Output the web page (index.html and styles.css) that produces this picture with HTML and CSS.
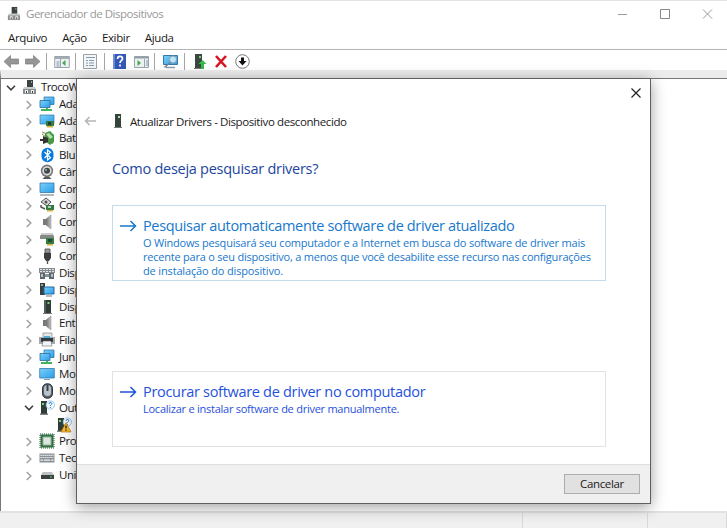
FILE: index.html
```html
<!DOCTYPE html>
<html lang="pt-BR">
<head>
<meta charset="utf-8">
<title>Gerenciador de Dispositivos</title>
<link rel="stylesheet" href="styles.css">
</head>
<body>
<svg class="defs" width="0" height="0">
  <defs>
    <linearGradient id="scr" x1="0" y1="0" x2="1" y2="1"><stop offset="0" stop-color="#7cd0fa"/><stop offset="1" stop-color="#2a9de8"/></linearGradient>
    <linearGradient id="met" x1="0" y1="0" x2="1" y2="0"><stop offset="0" stop-color="#6d6d6d"/><stop offset="1" stop-color="#c4c4c4"/></linearGradient>
  </defs>
  <symbol id="chev-r" viewBox="0 0 8 10"><path d="M1.7 1 5.8 5 1.7 9" fill="none" stroke="#a0a0a0" stroke-width="1.5"/></symbol>
  <symbol id="chev-d" viewBox="0 0 10 8"><path d="M1 1.7 5 5.8 9 1.7" fill="none" stroke="#404040" stroke-width="1.6"/></symbol>
  <symbol id="computer" viewBox="0 0 16 16"><path d="M6 1h6v8H6z" fill="#3c4443"/><path d="M10 2h1v2h-1z" fill="#8fa39a"/><path d="M3 8h11l1 2H2z" fill="#c9cccc"/><path d="M2 10h13v5H2z" fill="#8b8e90"/><path d="M4 11h3v3H4zM10 11h3v3h-3z" fill="#eee"/><path d="M5 12h1v2H5zM11 12h1v2h-1z" fill="#444"/></symbol>
  <symbol id="network" viewBox="0 0 16 16"><path d="M5 1h10v7.500H5z" fill="url(#scr)" stroke="#3478ac" stroke-width=".8"/><path d="M1 4.500h10v7H1z" fill="url(#scr)" stroke="#2c6c9c" stroke-width=".8"/><path d="M2 14h11M8 12V14" stroke="#43b45b" stroke-width="2"/></symbol>
  <symbol id="display-card" viewBox="0 0 16 16"><path d="M1 2h14v9H1z" fill="url(#scr)" stroke="#3478ac" stroke-width=".7"/><path d="M7 8h8v5H7z" fill="#347c43"/><path d="M9 9h3v3H9z" fill="#203d28"/><path d="M8 13h6v1.5H8z" fill="#d9b13b"/></symbol>
  <symbol id="battery" viewBox="0 0 16 16"><path d="M6 3 11 1l4 4v7l-4 3-5-4z" fill="#3f9a45"/><path d="m7 4 3-1 4 4-3 2z" fill="#b7dda7"/><path d="M1 9h3V6l5 2v4l-5 2v-3H1z" fill="#33342f"/><path d="M8 4 3 2M7 7 3 4m6 6c4 1 4 3 5 4" fill="none" stroke="#8e814d"/></symbol>
  <symbol id="bluetooth" viewBox="0 0 16 16"><rect x="2.5" y=".7" width="12" height="14.6" rx="6" fill="#0879df"/><path d="m5.5 5 6 5.8-3 2.3V3l3 2.3-6 5.7" fill="none" stroke="#fff" stroke-width="1.2"/></symbol>
  <symbol id="camera" viewBox="0 0 16 16"><circle cx="8" cy="6.8" r="6.2" fill="#777"/><circle cx="8" cy="6.8" r="4.600" fill="#ddd"/><circle cx="8" cy="6.8" r="3" fill="#3f4548"/><circle cx="7" cy="6" r="1" fill="#9bb3bf"/><path d="M3.500 15 6 12.500h4l2.500 2.500z" fill="#555"/></symbol>
  <symbol id="pc" viewBox="0 0 16 16"><path d="M1 2h14v9.500H1z" fill="url(#scr)" stroke="#3478ac" stroke-width=".8"/><path d="M1 14h14" stroke="#8097a5" stroke-width="1.3"/></symbol>
  <symbol id="monitor" viewBox="0 0 16 16"><path d="M.7 2.5h14.6v9.5H.7z" fill="url(#scr)" stroke="#3478ac" stroke-width=".8"/><path d="M5 13.5h6" stroke="#7f9fb2"/></symbol>
  <symbol id="storage" viewBox="0 0 16 16"><path d="m2 5 5-4 5 4-4 4z" fill="#d6d6d6" stroke="#555"/><circle cx="7" cy="5" r="1.5" fill="#555"/><path d="M2 8v2l4 2" fill="none" stroke="#555" stroke-width="1.5"/><path d="M7 8h8v5H7z" fill="#347c43"/><path d="M9 9h3v2H9z" fill="#b5cbb4"/><path d="M8 13h6v1.5H8z" fill="#d9b13b"/></symbol>
  <symbol id="speaker" viewBox="0 0 16 16"><path d="M4 5h3v6H4z" fill="#777"/><path d="m7 5 5-4v14l-5-4z" fill="url(#met)" stroke="#888" stroke-width=".5"/></symbol>
  <symbol id="adapter" viewBox="0 0 16 16"><path d="m1 5 2-3h10l2 3v3H1z" fill="#858a89"/><path d="m2 4 1-2h10l1 2z" fill="#ccc"/><path d="M7 7h8v6H7z" fill="#347c43"/><path d="M9 8h4v3H9z" fill="#204c2b"/><path d="M8 13h6v1.5H8z" fill="#d9b13b"/></symbol>
  <symbol id="usb" viewBox="0 0 16 16"><path d="M6 1h5v4H6z" fill="#999" stroke="#444" stroke-width=".8"/><path d="M5 5h7v5l-2 3H7l-2-3z" fill="#3d3d3d"/><path d="M8.5 12v4" stroke="#555" stroke-width="1.4"/></symbol>
  <symbol id="hid" viewBox="0 0 16 16"><path d="M0 3h16v5H0z" fill="#858b8e"/><path d="M1 4.5h14M1 6.5h14" stroke="#e0e3e4" stroke-dasharray="2 1"/><path d="M1 8h5v6H1zM10 8h5v6h-5z" fill="#5d686e"/><path d="M2 9h2v3H2zM12 9h2v3h-2z" fill="#b8c1c5"/><path d="M6 9h4v3H6z" fill="#8b9599"/></symbol>
  <symbol id="software" viewBox="0 0 16 16"><path d="M1 1h5v12H1z" fill="#35413c"/><path d="M2 2h2v2H2z" fill="#8ea69b"/><path d="M5 5h10v7H5z" fill="url(#scr)" stroke="#266b9e"/><path d="M7 14h6" stroke="#777"/></symbol>
  <symbol id="tower" viewBox="0 0 16 16"><path d="M5 1h7v13H5z" fill="#303c36"/><path d="M5 1h2v13H5z" fill="#506258"/><path d="M8.5 3h2v2h-2z" fill="#6edb72"/><path d="M4 14h9v1H4z" fill="#777"/></symbol>
  <symbol id="printer" viewBox="0 0 16 16"><path d="M4 1h9v5H4z" fill="#e4e8e9" stroke="#777" stroke-width=".6"/><path d="M0 5h16v7H0z" fill="#a4aaae"/><path d="M2 6h12v4H2z" fill="#323a3e"/><path d="M4 9h8l1 5H3z" fill="#f2f6f8" stroke="#555" stroke-width=".5"/><path d="M5 4h6v2H5z" fill="#50abd2"/></symbol>
  <symbol id="mouse" viewBox="0 0 16 16"><rect x="3.5" y=".8" width="10" height="14.4" rx="4.500" fill="#59616a" stroke="#303841"/><rect x="5" y="2" width="7" height="11" rx="3.5" fill="#bac2ca"/><path d="M7.5 2h2v6h-2z" fill="#3a4249"/></symbol>
  <symbol id="unknown" viewBox="0 0 16 16"><path d="M2 1h6v13H2z" fill="#303c36"/><path d="M3 3h2v2H3z" fill="#6edb72"/><path d="M1 13.5h8v1.3H1z" fill="#666"/><circle cx="11.3" cy="5" r="4.2" fill="#f3faff" stroke="#8dc0df" stroke-width=".8"/><path d="M10 4c0-2 3-2 2.8-.3 0 1-1.5 1-1.5 2.3M11.3 7v1" fill="none" stroke="#2977c6"/></symbol>
  <symbol id="warn" viewBox="0 0 16 16"><use href="#unknown"/><path d="m10 5.5 5 9.5H5z" fill="#f7bd31" stroke="#bd7611" stroke-width=".7"/><path d="M10 8.5v3M10 12.5v1.3" stroke="#33260c" stroke-width="1.4"/></symbol>
  <symbol id="chip" viewBox="0 0 16 16"><path d="M1.500 1.500h13v13h-13z" fill="#317143"/><path d="M1 1h14v14H1z" fill="none" stroke="#235b34" stroke-dasharray="1 1"/><path d="M4 4h8v8H4z" fill="#dce6de" stroke="#93b29a"/></symbol>
  <symbol id="keyboard" viewBox="0 0 16 16"><path d="M.5 3.5h15v9H.5z" fill="#8a9298"/><path d="M1.5 5.3h13M1.5 7.5h13" stroke="#edf1f3" stroke-width="1.2" stroke-dasharray="1.3 .7"/><path d="M1.5 10.2h2.3m1 0h6.4m1 0h2.3" stroke="#edf1f3" stroke-width="1.2"/></symbol>
  <symbol id="drive" viewBox="0 0 16 16"><path d="m3 6 1-1h9l2 3H2z" fill="#bfc2c2"/><path d="M2 8h13v4H2z" fill="#3b4141"/><path d="M11 9.5h2v1h-2z" fill="#62d467"/></symbol>
  <symbol id="winlist" viewBox="0 0 16 16"><path d="M.7 2.5h14.6v11H.7z" fill="#eef1f3" stroke="#9aa4ab"/><path d="M1 3h14v2H1z" fill="#a2adb5"/><path d="M2.5 8h3m-3 2h3m-3 2h3" stroke="#7d94b5"/><path d="M6.5 5v8" stroke="#9aa4ab"/></symbol>
</svg>

<div class="window">
  <header class="titlebar">
    <svg class="app-icon"><use href="#computer"/></svg>
    <span class="caption">Gerenciador de Dispositivos</span>
    <svg class="controls" viewBox="0 0 96 12"><path d="M1 6.5h9" stroke="#9b9b9b"/><path d="M43.5 1.5h9v9h-9z" fill="none" stroke="#888"/><path d="m86 1.500 9 9m0-9-9 9" stroke="#999" fill="none"/></svg>
  </header>
  <nav class="menubar"><span>Arquivo</span><span>Ação</span><span>Exibir</span><span>Ajuda</span></nav>
  <div class="toolbar">
    <svg viewBox="0 0 256 20" width="256" height="20">
      <g fill="#969696" stroke="#7c7c7c" stroke-width=".7"><path d="M4 11.500 10.500 5.500v3.500h8v5h-8v3.500z"/><path d="M40 11.500 33.500 5.500v3.500h-8v5h8v3.500z"/></g>
      <path d="M46.500 3v17M75.500 3v17M104.500 3v17M154.500 3v17M184.500 3v17" stroke="#a6a6a6"/>
      <use href="#winlist" x="54" y="4" width="16" height="16"/><path d="m65.500 10-3.500 3 3.500 3z" fill="#42a94a"/>
      <path d="M83.500 4.500h13v14h-13z" fill="#f4f5f6" stroke="#9ba1a5"/><path d="M86 7.500h9m-9 3h2m1 0h5m-8 2.500h2m1 0h5m-8 2.500h2m1 0h5" stroke="#8299b4"/>
      <path d="M113 4h13v15h-13z" fill="#3458b8"/><path d="M113 4h2v15h-2z" fill="#6d8bd6"/>
      <path d="M117.500 9c0-3.500 5-3.200 5-.3 0 2-2.500 2-2.500 4.300M120 14.500v2" fill="none" stroke="#fff" stroke-width="1.700"/>
      <path d="M134.500 6.500h14v11h-14z" fill="#eef1f3" stroke="#9aa4ab"/><path d="M134.500 7.500h14" stroke="#929fa9" stroke-width="2"/><path d="M144.500 9v8" stroke="#9aa4ab"/><path d="m137.500 10 3.500 3-3.500 3z" fill="#42a94a"/><path d="M146 11h2m-2 2h2m-2 2h2" stroke="#7d94b5"/>
      <path d="M163.500 5.500h14v9h-14z" fill="url(#scr)" stroke="#3579a8"/><path d="M166 17.500h9" stroke="#8aa0ad" stroke-width="1.500"/><circle cx="173" cy="9.500" r="3.600" fill="#b9e5fa" stroke="#8b9ca5"/><path d="m170.500 12-6 5.500" stroke="#77818a" stroke-width="1.500"/>
      <path d="M195 4h7v14h-7z" fill="#3b4842"/><path d="M199 6h2v2h-2z" fill="#83c77f"/><path d="M194 18h8v1h-8z" fill="#777"/><path d="m202.500 10 4 4h-2.500v5h-3v-5h-2.500z" fill="#35b94a"/>
      <path d="m216 6 10 11m0-11-10 11" stroke="#d51522" stroke-width="2.600"/>
      <circle cx="242.500" cy="11.500" r="6.800" fill="#fff" stroke="#777"/><path d="M241 7.500h3V11h2.500l-4 4.500-4-4.500h2.500z" fill="#111"/>
    </svg>
  </div>
  <main class="tree">
    <div class="row root"><svg class="ch"><use href="#chev-d"/></svg><svg class="ic"><use href="#computer"/></svg><span>TrocoW</span></div>
    <div class="row"><svg class="ch"><use href="#chev-r"/></svg><svg class="ic"><use href="#network"/></svg><span>Ada</span></div>
    <div class="row"><svg class="ch"><use href="#chev-r"/></svg><svg class="ic"><use href="#display-card"/></svg><span>Ada</span></div>
    <div class="row"><svg class="ch"><use href="#chev-r"/></svg><svg class="ic"><use href="#battery"/></svg><span>Bat</span></div>
    <div class="row"><svg class="ch"><use href="#chev-r"/></svg><svg class="ic"><use href="#bluetooth"/></svg><span>Blu</span></div>
    <div class="row"><svg class="ch"><use href="#chev-r"/></svg><svg class="ic"><use href="#camera"/></svg><span>Câr</span></div>
    <div class="row"><svg class="ch"><use href="#chev-r"/></svg><svg class="ic"><use href="#pc"/></svg><span>Cor</span></div>
    <div class="row"><svg class="ch"><use href="#chev-r"/></svg><svg class="ic"><use href="#storage"/></svg><span>Cor</span></div>
    <div class="row"><svg class="ch"><use href="#chev-r"/></svg><svg class="ic"><use href="#speaker"/></svg><span>Cor</span></div>
    <div class="row"><svg class="ch"><use href="#chev-r"/></svg><svg class="ic"><use href="#adapter"/></svg><span>Cor</span></div>
    <div class="row"><svg class="ch"><use href="#chev-r"/></svg><svg class="ic"><use href="#usb"/></svg><span>Cor</span></div>
    <div class="row"><svg class="ch"><use href="#chev-r"/></svg><svg class="ic"><use href="#hid"/></svg><span>Disp</span></div>
    <div class="row"><svg class="ch"><use href="#chev-r"/></svg><svg class="ic"><use href="#software"/></svg><span>Disp</span></div>
    <div class="row"><svg class="ch"><use href="#chev-r"/></svg><svg class="ic"><use href="#tower"/></svg><span>Disp</span></div>
    <div class="row"><svg class="ch"><use href="#chev-r"/></svg><svg class="ic"><use href="#speaker"/></svg><span>Ent</span></div>
    <div class="row"><svg class="ch"><use href="#chev-r"/></svg><svg class="ic"><use href="#printer"/></svg><span>Fila</span></div>
    <div class="row"><svg class="ch"><use href="#chev-r"/></svg><svg class="ic"><use href="#network"/></svg><span>Jun</span></div>
    <div class="row"><svg class="ch"><use href="#chev-r"/></svg><svg class="ic"><use href="#monitor"/></svg><span>Mo</span></div>
    <div class="row"><svg class="ch"><use href="#chev-r"/></svg><svg class="ic"><use href="#mouse"/></svg><span>Mo</span></div>
    <div class="row"><svg class="ch"><use href="#chev-d"/></svg><svg class="ic"><use href="#unknown"/></svg><span>Out</span></div>
    <div class="row leaf"><svg class="ic"><use href="#warn"/></svg></div>
    <div class="row"><svg class="ch"><use href="#chev-r"/></svg><svg class="ic"><use href="#chip"/></svg><span>Pro</span></div>
    <div class="row"><svg class="ch"><use href="#chev-r"/></svg><svg class="ic"><use href="#keyboard"/></svg><span>Tec</span></div>
    <div class="row"><svg class="ch"><use href="#chev-r"/></svg><svg class="ic"><use href="#drive"/></svg><span>Uni</span></div>
  </main>
  <footer class="statusbar"><i></i><i></i><i></i></footer>
</div>

<section class="dialog">
  <div class="dialog-top"><svg width="12" height="12" viewBox="0 0 12 12"><path d="m1.500 1.500 9 9m0-9-9 9" stroke="#222" stroke-width="1.200"/></svg></div>
  <div class="dialog-title">
    <svg class="back" viewBox="0 0 12 10"><path d="M12 5H1.500M5.500 1l-4 4 4 4" fill="none" stroke="#b5b5b5" stroke-width="1.500"/></svg>
    <svg class="dev" viewBox="0 0 8 14"><path d="M1 0h6v13H1z" fill="#35443b"/><path d="M4 2h2v2H4z" fill="#b5d7b8"/><path d="M0 13h8v1H0z" fill="#777"/></svg>
    <span>Atualizar Drivers - Dispositivo desconhecido</span>
  </div>
  <h1>Como deseja pesquisar drivers?</h1>
  <div class="option auto">
    <svg class="arrow" viewBox="0 0 17 12"><path d="M0 6h15.500M10.500 1l5 5-5 5" fill="none" stroke="currentColor" stroke-width="1.500"/></svg>
    <div><h2>Pesquisar automaticamente software de driver atualizado</h2>
    <p><span class="l1">O Windows pesquisará seu computador e a Internet em busca do software de driver mais</span><br><span class="l2">recente para o seu dispositivo, a menos que você desabilite esse recurso nas configurações</span><br><span class="l3">de instalação do dispositivo.</span></p></div>
  </div>
  <div class="option manual">
    <svg class="arrow" viewBox="0 0 17 12"><path d="M0 6h15.500M10.500 1l5 5-5 5" fill="none" stroke="currentColor" stroke-width="1.500"/></svg>
    <div><h2>Procurar software de driver no computador</h2>
    <p>Localizar e instalar software de driver manualmente.</p></div>
  </div>
  <div class="actions"><button>Cancelar</button></div>
</section>
</body>
</html>
```
FILE: styles.css
```css
* { box-sizing: border-box; }
body {
  margin: 0;
  width: 727px;
  height: 528px;
  overflow: hidden;
  position: relative;
  background: #fff;
  font-family: "Open Sans", "Noto Sans", sans-serif;
  font-size: 11.5px;
  color: #1a1a1a;
}
svg { display: block; flex: none; }
.defs { position: absolute; }
span, h1, h2, p { white-space: nowrap; }

.window { height: 528px; display: flex; flex-direction: column; border-top: 1px solid #e3e3e3; }
.titlebar { height: 25px; display: flex; align-items: center; padding-left: 6px; }
.app-icon { width: 15px; height: 15px; }
.caption { margin-left: 5px; color: #999; letter-spacing: -.48px; }
.controls { width: 96px; height: 12px; margin-left: auto; margin-right: 14px; }
.menubar { height: 24px; display: flex; align-items: center; gap: 15px; padding-left: 8px; border-bottom: 1px solid #b4b4b4; letter-spacing: -.35px; }
.toolbar { height: 20px; }
.tree {
  height: 441px;
  border-top: 8px solid #ececec;
  border-left: 1px solid #777;
  box-shadow: inset 0 1px #777;
  padding-top: 1px;
}
.row { height: 16.87px; width: 76px; display: flex; align-items: center; padding-left: 23px; letter-spacing: -.45px; }
.row.root { padding-left: 5px; letter-spacing: -.6px; }
.row.leaf { padding-left: 55px; }
.ch { width: 10px; height: 10px; margin-top: 1px; }
.ic { width: 16px; height: 16px; margin-left: 5px; }
.root .ic { margin-left: 5px; }
.leaf .ic { margin-left: 0; }
.row span { margin-left: 4px; line-height: 16px; }

.statusbar { height: 17px; background: #f0f0f0; border-top: 2px solid #e2e2e2; display: flex; }
.statusbar i { border-right: 1px solid #d9d9d9; width: 125px; }
.statusbar i:first-child { width: 523px; }
.statusbar i:last-child { width: 79px; }

.dialog {
  position: absolute;
  left: 76px;
  top: 78px;
  width: 575px;
  height: 426px;
  background: #fff;
  border: 1px solid #5f5f5f;
  box-shadow: 0 3px 14px rgba(0, 0, 0, .38);
  display: flex;
  flex-direction: column;
}
.dialog-top { height: 29px; display: flex; justify-content: flex-end; padding: 8px 8px 0; }
.dialog-title { height: 26px; display: flex; align-items: center; padding-left: 7px; letter-spacing: -.4px; }
.back { width: 12px; height: 10px; }
.dev { width: 8px; height: 14px; margin-left: 18px; }
.dialog-title span { margin-left: 8px; }
h1 { margin: 23px 0 0 35px; height: 24px; font-size: 14.500px; line-height: 24px; font-weight: 400; color: #1c46a0; letter-spacing: -.27px; }
.option { margin-left: 35px; width: 494px; height: 76px; border: 1px solid #e3e3e3; display: flex; padding: 10px 0 0 7px; color: #1f51dc; }
.auto { margin-top: 24px; border-color: #c4dcec; color: #1878cc; }
.manual { margin-top: 90px; }
.arrow { width: 17px; height: 12px; margin-top: 4px; }
.option > div { margin-left: 6px; }
h2 { margin: 0 0 1px; font-size: 14.500px; line-height: 19px; font-weight: 400; letter-spacing: -.35px; }
.manual h2 { letter-spacing: -.31px; }
p { margin: 0; font-size: 11px; line-height: 14px; letter-spacing: -.25px; }
.l1 { letter-spacing: -.2px; }
.l2 { letter-spacing: -.22px; }
.l3 { letter-spacing: -.15px; }
.actions { margin-top: auto; height: 39px; background: #f0f0f0; border-top: 1px solid #dfdfdf; display: flex; justify-content: flex-end; padding: 9px 10px 0 0; }
button { width: 76px; height: 20px; padding: 0; border: 1px solid #adadad; background: #e1e1e1; font: inherit; line-height: 18px; letter-spacing: -.35px; color: #1a1a1a; }
```
